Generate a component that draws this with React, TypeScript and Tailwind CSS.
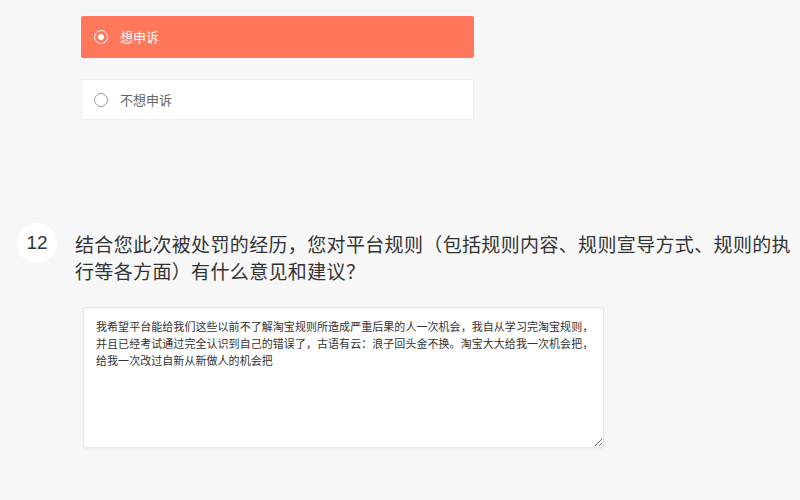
import { useState } from "react";

const options = ["想申诉", "不想申诉"];

const answer =
  "我希望平台能给我们这些以前不了解淘宝规则所造成严重后果的人一次机会，我自从学习完淘宝规则，\n并且已经考试通过完全认识到自己的错误了，古语有云：浪子回头金不换。淘宝大大给我一次机会把，\n给我一次改过自新从新做人的机会把";

const App = () => {
  const [selected, setSelected] = useState(0); // 当前选中的选项
  const [text, setText] = useState(answer);

  return (
    <div
      className="min-h-screen w-full bg-[#f7f7f7] pt-[16px]"
      style={{ fontFamily: '"Noto Sans CJK SC", "Liberation Sans", sans-serif' }}>
      {/* 单选项 */}
      <div className="ml-[81px] flex w-[393px] flex-col gap-[21px]">
        {options.map((label, i) => {
          const active = selected === i;
          return (
            <div
              key={label}
              onClick={() => setSelected(i)}
              className={
                active
                  ? "flex h-[42px] cursor-pointer items-center rounded-[2px] bg-[#ff785c] pl-[13px]"
                  : "flex h-[41px] cursor-pointer items-center rounded-[2px] border border-[#efefef] bg-white pl-[12px]"
              }>
              {active ? (
                <span className="flex h-[14px] w-[14px] items-center justify-center rounded-full border-[1.5px] border-white">
                  <span className="h-[6px] w-[6px] rounded-full bg-white" />
                </span>
              ) : (
                <span className="h-[14px] w-[14px] rounded-full border-[1.5px] border-[#9a9a9a]" />
              )}
              <span
                className={
                  active
                    ? "ml-[12px] text-[13px] text-white"
                    : "ml-[12px] text-[13px] text-[#666]"
                }>
                {label}
              </span>
            </div>
          );
        })}
      </div>

      {/* 问题 12 */}
      <div className="mt-[103px] flex items-start">
        <div
          className="ml-[17px] flex h-[40px] w-[40px] shrink-0 items-center justify-center rounded-full bg-white text-[19px] text-[#333]"
          style={{ fontFamily: '"Liberation Sans", Arial, sans-serif' }}>
          12
        </div>
        <div className="ml-[18px] mt-[7px] w-[722px] text-[19px] leading-[27px] tracking-[0.35px] text-[#333]">
          结合您此次被处罚的经历，您对平台规则（包括规则内容、规则宣导方式、规则的执行等各方面）有什么意见和建议？
        </div>
      </div>

      {/* 回答 */}
      <textarea
        value={text}
        onChange={(e) => setText(e.target.value)}
        className="ml-[83px] mt-[23px] block h-[141px] w-[521px] rounded-[2px] border border-[#e6e6e6] bg-white pb-[8px] pl-[12px] pr-[6px] pt-[10px] text-[11px] leading-[17px] tracking-[0.05px] text-[#333] shadow-[0_2px_2px_rgba(0,0,0,0.03)] outline-none"
        style={{ fontFamily: '"Noto Sans CJK SC", "Liberation Sans", sans-serif' }}
      />
    </div>
  );
};

export default App;
